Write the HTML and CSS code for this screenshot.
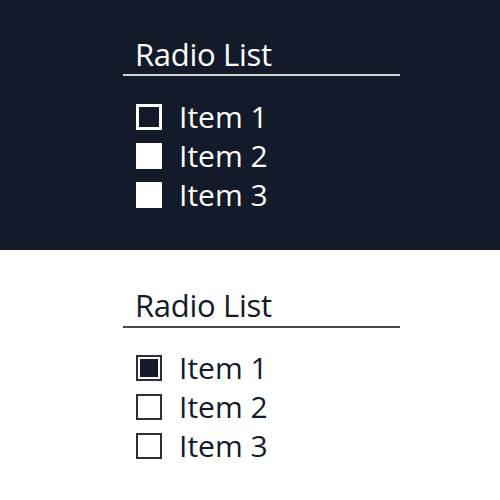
FILE: index.html
```html
<!DOCTYPE html>
<html lang="en">
<head>
    <meta charset="UTF-8">
    <title>Radio List</title>
    <link rel="stylesheet" href="styles.css">
</head>
<body>
    <div class="panel dark">
        <div class="group">
            <h2 class="title">Radio List</h2>
            <ul class="list">
                <li class="item"><span class="box"></span>Item 1</li>
                <li class="item"><span class="box filled"></span>Item 2</li>
                <li class="item"><span class="box filled"></span>Item 3</li>
            </ul>
        </div>
    </div>

    <div class="panel light">
        <div class="group">
            <h2 class="title">Radio List</h2>
            <ul class="list">
                <li class="item"><span class="box checked"></span>Item 1</li>
                <li class="item"><span class="box"></span>Item 2</li>
                <li class="item"><span class="box"></span>Item 3</li>
            </ul>
        </div>
    </div>
</body>
</html>
```

FILE: styles.css
```css
body {
    margin: 0;
    font-family: "Open Sans", "Noto Sans", sans-serif;
}
.panel {
    height: 250px;
    padding-top: 36px;
    box-sizing: border-box;
}
.dark {
    background: #131a2a;
    color: #ffffff;
}
.light {
    background: #ffffff;
    color: #131a2a;
    padding-top: 37px;
}
.group {
    width: 277px;
    margin-left: 123px;
}
.title {
    margin: 0;
    padding: 0 0 2px 12px;
    font-size: 31px;
    font-weight: normal;
    line-height: 36px;
    letter-spacing: -0.3px;
    border-bottom: 2px solid #cfd1d6;
}
.light .title {
    padding-bottom: 3px;
    border-bottom-color: #45484e;
}
.list {
    list-style: none;
    margin: 21px 0 0;
    padding: 0 0 0 13px;
}
.light .list {
    margin-top: 20px;
}
.item {
    display: flex;
    align-items: center;
    gap: 17px;
    font-size: 30px;
    line-height: 39px;
}
.box {
    width: 26px;
    height: 26px;
    box-sizing: border-box;
    border: 3px solid #ffffff;
}
.box.filled {
    background: #ffffff;
}
.light .box {
    border: 2px solid #2c2f36;
}
.light .box.checked {
    background: #131a2a;
    box-shadow: inset 0 0 0 2px #ffffff;
}
```
